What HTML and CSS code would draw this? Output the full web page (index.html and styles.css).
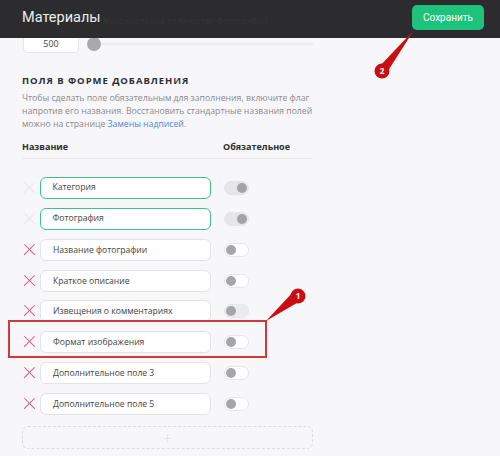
FILE: index.html
```html
<!DOCTYPE html>
<html lang="ru">
<head>
<meta charset="utf-8">
<link rel="stylesheet" href="styles.css">
</head>
<body>
<header class="topbar">
  <h1 class="title">Материалы</h1>
  <span class="ghost">Максимальное количество фотографий</span>
  <button class="save">Сохранить</button>
</header>
<main class="content">
  <div class="limit-row">
    <div class="num">500</div>
    <div class="slider"><span class="knob"></span><span class="track"></span></div>
  </div>
  <h2 class="section">ПОЛЯ В ФОРМЕ ДОБАВЛЕНИЯ</h2>
  <p class="hint">Чтобы сделать поле обязательным для заполнения, включите флаг напротив его названия. Восстановить стандартные названия полей можно на странице <a href="#">Замены надписей</a>.</p>
  <div class="cols"><span>Название</span><span>Обязательное</span></div>
  <div class="rows">
    <div class="row"><span class="x off"></span><div class="field active">Категория</div><span class="tog on"></span></div>
    <div class="row"><span class="x off"></span><div class="field active">Фотография</div><span class="tog on"></span></div>
    <div class="row"><span class="x"></span><div class="field">Название фотографии</div><span class="tog"></span></div>
    <div class="row"><span class="x"></span><div class="field">Краткое описание</div><span class="tog"></span></div>
    <div class="row"><span class="x"></span><div class="field">Извещения о комментариях</div><span class="tog dis"></span></div>
    <div class="row"><span class="x"></span><div class="field">Формат изображения</div><span class="tog"></span></div>
    <div class="row"><span class="x"></span><div class="field">Дополнительное поле 3</div><span class="tog"></span></div>
    <div class="row"><span class="x"></span><div class="field">Дополнительное поле 5</div><span class="tog"></span></div>
  </div>
  <div class="add">+</div>
</main>
<svg class="notes" width="500" height="456" viewBox="0 0 500 456">
  <rect x="9" y="321" width="257" height="36" fill="none" stroke="#d03a3a" stroke-width="2"/>
  <polygon points="266,321 293,292 302,300" fill="#c80e12"/>
  <circle cx="298" cy="296" r="7.5" fill="#c80e12"/>
  <text x="298" y="299" font-size="8" fill="#fff" text-anchor="middle" font-family="Open Sans, sans-serif" font-weight="700">1</text>
  <polygon points="414,30 378,68 386,74" fill="#c80e12"/>
  <circle cx="382" cy="71" r="7.5" fill="#c80e12"/>
  <text x="382" y="74" font-size="8" fill="#fff" text-anchor="middle" font-family="Open Sans, sans-serif" font-weight="700">2</text>
</svg>
</body>
</html>
```
FILE: styles.css
```css
* { box-sizing: border-box; }
html, body { margin: 0; padding: 0; }
body {
  width: 500px;
  height: 456px;
  overflow: hidden;
  background: #f7f7f9;
  font-family: "Open Sans", "Noto Sans", sans-serif;
  color: #333;
  position: relative;
}
.topbar {
  position: absolute;
  top: 0; left: 0; right: 0;
  height: 38px;
  background: #2c2c2e;
  display: flex;
  align-items: center;
  padding: 0 16px 0 22px;
  z-index: 2;
}
.title {
  margin: 0 0 3px 0;
  font-family: Roboto, sans-serif;
  font-size: 14.5px;
  font-weight: 400;
  color: #ececec;
}
.ghost {
  font-size: 8.5px;
  color: #363638;
  margin: 2px 0 0 2px;
}
.save {
  margin-left: auto;
  margin-bottom: 4px;
  width: 72px;
  height: 25px;
  border: none;
  border-radius: 5px;
  background: #1dc27c;
  color: #fff;
  font-family: Roboto, sans-serif;
  font-size: 10px;
  padding: 0;
}
.content {
  padding: 30px 0 0 22px;
  width: 313px;
}
.limit-row {
  display: flex;
  align-items: center;
  height: 23px;
}
.num {
  width: 56px;
  height: 23px;
  margin-left: 1px;
  background: #fff;
  border: 1px solid #e6e6e8;
  border-radius: 4px;
  font-size: 9px;
  text-align: center;
  line-height: 26px;
  color: #444;
}
.slider {
  flex: 1;
  display: flex;
  align-items: center;
  margin-left: 8px;
  margin-top: 4px;
}
.knob {
  width: 14px; height: 14px;
  border-radius: 50%;
  background: #a9a9ab;
  flex: none;
}
.track {
  flex: 1;
  height: 2px;
  background: #ececee;
}
.section {
  margin: 22px 0 0 0;
  font-size: 9.5px;
  font-weight: 700;
  letter-spacing: 0.95px;
  color: #2e2e30;
  line-height: 12px;
}
.hint {
  margin: 5px 0 0 0;
  font-size: 8.7px;
  line-height: 13px;
  color: #8a8a8c;
}
.hint a { color: #4f86e0; text-decoration: none; }
.cols {
  display: flex;
  margin-top: 10px;
  padding-bottom: 5px;
  border-bottom: 1px solid #e9e9eb;
  font-size: 9px;
  font-weight: 700;
  color: #2e2e30;
  line-height: 12px;
}
.cols span:first-child { width: 201px; }
.rows {
  display: flex;
  flex-direction: column;
  gap: 8.85px;
  margin-top: 18px;
}
.row {
  display: flex;
  align-items: center;
  height: 22px;
}
.x {
  width: 18px;
  height: 22px;
  position: relative;
  flex: none;
}
.x::before, .x::after {
  content: "";
  position: absolute;
  left: 0px;
  top: 10px;
  width: 15px;
  height: 1.4px;
  background: #e0527f;
  transform: rotate(45deg);
}
.x::after { transform: rotate(-45deg); }
.x.off::before, .x.off::after { background: #e6e6e8; }
.field {
  width: 171px;
  height: 22px;
  background: #fff;
  border: 1px solid #e3e3e5;
  border-radius: 6px;
  font-size: 8.6px;
  color: #444;
  padding-left: 12px;
  line-height: 20px;
}
.field.active { border: 1.5px solid #3cc38b; line-height: 19px; padding-left: 11.5px; }
.tog {
  margin-left: 13px;
  width: 25px;
  height: 14px;
  border-radius: 7px;
  background: #fff;
  border: 1px solid #e6e6e8;
  position: relative;
}
.tog::after {
  content: "";
  position: absolute;
  top: 1px;
  left: 1px;
  width: 10px;
  height: 10px;
  border-radius: 50%;
  background: #a6a6a8;
}
.tog.on { background: #e6e6e8; }
.tog.on::after { left: auto; right: 1px; background: #a3a3a5; }
.tog.dis { background: #ececee; }
.add {
  margin-top: 11px;
  height: 23px;
  border: 1px dashed #dcdcde;
  border-radius: 6px;
  text-align: center;
  font-size: 17px;
  font-weight: 300;
  line-height: 21px;
  color: #dcdcde;
}
.notes {
  position: absolute;
  left: 0; top: 0;
  z-index: 3;
  pointer-events: none;
}
```
